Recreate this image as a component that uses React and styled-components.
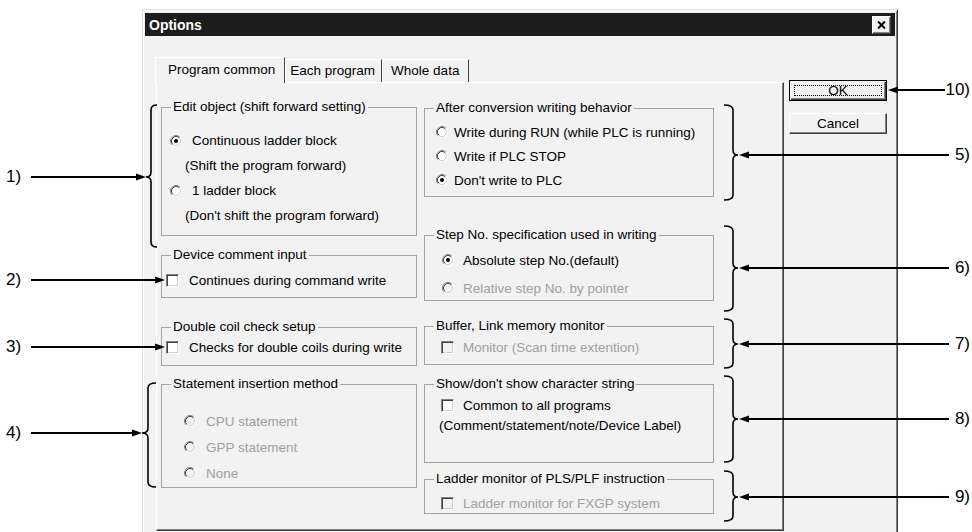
import React from "react";
import styled, { css, createGlobalStyle } from "styled-components";

const GlobalStyle = createGlobalStyle`
  html, body {
    margin: 0;
    padding: 0;
    background: #fff;
  }
  body {
    font-family: "Liberation Sans", Arial, sans-serif;
  }
`;

const FONT = `"Liberation Sans", Arial, sans-serif`;

const Page = styled.div`
  position: relative;
  width: 972px;
  height: 532px;
  overflow: hidden;
  background: #fff;
`;

const Dialog = styled.div`
  box-sizing: border-box;
  width: 756px;
  height: 560px;
  margin: 9px 0 0 142px;
  padding: 3px 2px 0 2px;
  background: #f2f2f2;
  border: 1px solid;
  border-color: #dcdcdc #404040 #404040 #dcdcdc;
  box-shadow: inset 1px 1px 0 #fff, inset -1px -1px 0 #808080;
`;

const TitleBar = styled.div`
  display: flex;
  align-items: center;
  justify-content: space-between;
  height: 23px;
  padding: 0 4px;
  background: #1c1c1c;
`;

const Title = styled.span`
  color: #fff;
  font: bold 14px ${FONT};
`;

const CloseBox = styled.div`
  box-sizing: border-box;
  display: flex;
  align-items: center;
  justify-content: center;
  width: 19px;
  height: 18px;
  background: #f2f2f2;
  border: 1px solid;
  border-color: #fff #404040 #404040 #fff;
  box-shadow: inset -1px -1px 0 #808080;
`;

const Body = styled.div`
  display: flex;
  align-items: flex-start;
  padding-top: 21px;
`;

const TabArea = styled.div`
  display: flex;
  flex-direction: column;
  margin-left: 10px;
`;

const TabStrip = styled.div`
  display: flex;
  align-items: flex-end;
  height: 25px;
`;

const Tab = styled.div`
  box-sizing: border-box;
  height: 23px;
  display: flex;
  align-items: center;
  padding: 0 ${(p) => p.$right || 6}px 1px ${(p) => p.$left || 4}px;
  font: 13.5px ${FONT};
  color: #000;
  border-top: 1px solid #fff;
  border-left: 1px solid #fff;
  border-right: 1px solid #404040;
  ${(p) =>
    p.$active &&
    css`
      height: 26px;
      margin-bottom: -1px;
      padding: 0 9px 2px 12px;
      position: relative;
      z-index: 1;
      background: #f2f2f2;
    `}
`;

const Panel = styled.div`
  box-sizing: border-box;
  width: 628px;
  height: 449px;
  margin-left: 1px;
  padding: 17px 0 0 4px;
  border: 1px solid;
  border-color: #fff #404040 #404040 #fff;
  box-shadow: inset -1px -1px 0 #808080;
  display: grid;
  grid-template-columns: 256px 290px;
  column-gap: 7px;
  align-items: start;
`;

const Column = styled.div`
  display: flex;
  flex-direction: column;
`;

const Group = styled.fieldset`
  box-sizing: border-box;
  min-width: 0;
  margin: ${(p) => p.$mt || 0}px 0 0 0;
  padding: ${(p) => p.$pt}px 0 0 0;
  height: ${(p) => p.$h}px;
  border: 1px solid #a3a3a3;
`;

const Legend = styled.legend`
  margin-left: 9px;
  padding: 0 2px;
  font: 13.5px ${FONT};
  line-height: 14px;
  color: #000;
`;

const Row = styled.div`
  display: flex;
  align-items: center;
  height: ${(p) => p.$h || 20}px;
  padding-left: ${(p) => p.$indent}px;
  font: 13.5px ${FONT};
  white-space: nowrap;
  color: ${(p) => (p.$disabled ? "#a0a0a0" : "#000")};
`;

const Text = styled.span`
  margin-left: ${(p) => p.$gap || 0}px;
`;

const RadioSvg = styled.svg`
  flex: none;
  display: block;
`;

const Check = styled.span`
  box-sizing: border-box;
  flex: none;
  width: 13px;
  height: 13px;
  border: 1px solid;
  border-color: #808080 #fff #fff #808080;
  background: ${(p) => (p.$disabled ? "#f2f2f2" : "#fff")};
  box-shadow: inset 1px 1px 0 #404040, inset -1px -1px 0 #d4d0c8;
`;

const Buttons = styled.div`
  display: flex;
  flex-direction: column;
  gap: 12px;
  margin-left: 5px;
  padding-top: 23px;
`;

const DlgButton = styled.div`
  box-sizing: border-box;
  display: flex;
  align-items: center;
  justify-content: center;
  width: 98px;
  height: 21px;
  font: 13.5px ${FONT};
  color: #000;
  background: #f2f2f2;
  border: 1px solid;
  border-color: #fff #404040 #404040 #fff;
  box-shadow: inset -1px -1px 0 #808080;
  ${(p) =>
    p.$default &&
    css`
      padding: 4px;
      border: 1px solid #000;
      box-shadow: inset 1px 1px 0 #fff, inset -1px -1px 0 #404040,
        inset -2px -2px 0 #808080;
    `}
`;

const Focus = styled.span`
  flex: 1;
  align-self: stretch;
  display: flex;
  align-items: center;
  justify-content: center;
  border: 1px dotted #000;
`;

const Overlay = styled.svg`
  position: absolute;
  left: 0;
  top: 0;
  pointer-events: none;
`;

const Callout = styled.span`
  position: absolute;
  top: ${(p) => p.$y - 10}px;
  ${(p) => (p.$side === "left" ? "left: 6px;" : "right: 2px;")}
  font: 17px ${FONT};
  line-height: 20px;
  color: #000;
`;

const Radio = ({ checked, disabled }) => (
  <RadioSvg width="12" height="12" viewBox="0 0 12 12">
    <circle cx="6" cy="6" r="4.5" fill={disabled ? "#f2f2f2" : "#fff"} />
    <path d="M2.11 9.89A5.5 5.5 0 0 1 9.89 2.11" stroke="#808080" fill="none" />
    <path d="M9.89 2.11A5.5 5.5 0 0 1 2.11 9.89" stroke="#fff" fill="none" />
    <path d="M2.82 9.18A4.5 4.5 0 0 1 9.18 2.82" stroke="#404040" fill="none" />
    <path d="M9.18 2.82A4.5 4.5 0 0 1 2.82 9.18" stroke="#d4d0c8" fill="none" />
    {checked && (
      <circle cx="6" cy="6" r="2" fill={disabled ? "#808080" : "#000"} />
    )}
  </RadioSvg>
);

const Option = ({ kind, checked, disabled, indent, gap, h, children }) => (
  <Row $indent={indent} $h={h} $disabled={disabled}>
    {kind === "radio" && <Radio checked={checked} disabled={disabled} />}
    {kind === "check" && <Check $disabled={disabled} />}
    <Text $gap={kind ? gap : 0}>{children}</Text>
  </Row>
);

const leftCallouts = [
  { n: "1)", y: 177, tip: 146 },
  { n: "2)", y: 280, tip: 165 },
  { n: "3)", y: 347, tip: 165 },
  { n: "4)", y: 433, tip: 142 },
];

const rightCallouts = [
  { n: "10)", y: 90, tip: 888, end: 945 },
  { n: "5)", y: 155, tip: 739, end: 949 },
  { n: "6)", y: 268, tip: 739, end: 949 },
  { n: "7)", y: 344, tip: 739, end: 949 },
  { n: "8)", y: 419, tip: 739, end: 949 },
  { n: "9)", y: 497, tip: 739, end: 949 },
];

const leftBraces = [
  { x: 151, top: 105, bottom: 247, mid: 177, tip: 146, end: 157 },
  { x: 148, top: 383, bottom: 487, mid: 433, tip: 142, end: 156 },
];

const rightBraces = [
  { top: 105, bottom: 200, mid: 155 },
  { top: 226, bottom: 311, mid: 268 },
  { top: 319, bottom: 368, mid: 344 },
  { top: 376, bottom: 462, mid: 419 },
  { top: 471, bottom: 521, mid: 497 },
];

const brace = (x, top, bottom, mid, tip, end) =>
  `M${end} ${top} Q${x} ${top} ${x} ${top + 5} L${x} ${mid - 5} Q${x} ${mid} ${tip} ${mid} ` +
  `M${tip} ${mid} Q${x} ${mid} ${x} ${mid + 5} L${x} ${bottom - 5} Q${x} ${bottom} ${end} ${bottom}`;

const Annotations = () => (
  <>
    <Overlay width="972" height="532" viewBox="0 0 972 532">
      <g stroke="#000" strokeWidth="1.6" fill="none">
        {leftBraces.map((b, i) => (
          <path key={i} d={brace(b.x, b.top, b.bottom, b.mid, b.tip, b.end)} />
        ))}
        {rightBraces.map((b, i) => (
          <path key={i} d={brace(733, b.top, b.bottom, b.mid, 738, 724)} />
        ))}
      </g>
      {leftCallouts.map((c) => (
        <g key={c.n}>
          <line x1="31" y1={c.y} x2={c.tip - 8} y2={c.y} stroke="#000" strokeWidth="2" />
          <path
            d={`M${c.tip} ${c.y} L${c.tip - 10} ${c.y - 3.5} L${c.tip - 10} ${c.y + 3.5}Z`}
            fill="#000"
          />
        </g>
      ))}
      {rightCallouts.map((c) => (
        <g key={c.n}>
          <line x1={c.tip + 8} y1={c.y} x2={c.end} y2={c.y} stroke="#000" strokeWidth="2" />
          <path
            d={`M${c.tip} ${c.y} L${c.tip + 10} ${c.y - 3.5} L${c.tip + 10} ${c.y + 3.5}Z`}
            fill="#000"
          />
        </g>
      ))}
    </Overlay>
    {leftCallouts.map((c) => (
      <Callout key={c.n} $side="left" $y={c.y}>
        {c.n}
      </Callout>
    ))}
    {rightCallouts.map((c) => (
      <Callout key={c.n} $side="right" $y={c.y}>
        {c.n}
      </Callout>
    ))}
  </>
);

const App = () => (
  <Page>
    <GlobalStyle />
    <Dialog>
      <TitleBar>
        <Title>Options</Title>
        <CloseBox>
          <svg width="9" height="8" viewBox="0 0 9 8">
            <path d="M1 0.5L8 7.5M8 0.5L1 7.5" stroke="#000" strokeWidth="2" />
          </svg>
        </CloseBox>
      </TitleBar>
      <Body>
        <TabArea>
          <TabStrip>
            <Tab $active>Program common</Tab>
            <Tab>Each program</Tab>
            <Tab $left={8} $right={9}>
              Whole data
            </Tab>
          </TabStrip>
          <Panel>
            <Column>
              <Group $h={136} $pt={14}>
                <Legend>Edit object (shift forward setting)</Legend>
                <Option kind="radio" checked indent={8} gap={10} h={25}>
                  Continuous ladder block
                </Option>
                <Option indent={23} h={25}>
                  (Shift the program forward)
                </Option>
                <Option kind="radio" indent={8} gap={10} h={25}>
                  1 ladder block
                </Option>
                <Option indent={23} h={25}>
                  (Don't shift the program forward)
                </Option>
              </Group>
              <Group $mt={12} $h={50} $pt={8}>
                <Legend>Device comment input</Legend>
                <Option kind="check" indent={4} gap={10}>
                  Continues during command write
                </Option>
              </Group>
              <Group $mt={22} $h={46} $pt={3}>
                <Legend>Double coil check setup</Legend>
                <Option kind="check" indent={4} gap={10}>
                  Checks for double coils during write
                </Option>
              </Group>
              <Group $mt={11} $h={111} $pt={17}>
                <Legend>Statement insertion method</Legend>
                <Option kind="radio" disabled indent={22} gap={10} h={26}>
                  CPU statement
                </Option>
                <Option kind="radio" disabled indent={22} gap={10} h={26}>
                  GPP statement
                </Option>
                <Option kind="radio" disabled indent={22} gap={10} h={26}>
                  None
                </Option>
              </Group>
            </Column>
            <Column>
              <Group $mt={1} $h={96} $pt={5}>
                <Legend>After conversion writing behavior</Legend>
                <Option kind="radio" indent={11} gap={6} h={24}>
                  Write during RUN (while PLC is running)
                </Option>
                <Option kind="radio" indent={11} gap={6} h={24}>
                  Write if PLC STOP
                </Option>
                <Option kind="radio" checked indent={11} gap={6} h={24}>
                  Don't write to PLC
                </Option>
              </Group>
              <Group $mt={31} $h={73} $pt={4}>
                <Legend>Step No. specification used in writing</Legend>
                <Option kind="radio" checked indent={17} gap={9} h={28}>
                  Absolute step No.(default)
                </Option>
                <Option kind="radio" disabled indent={17} gap={9} h={28}>
                  Relative step No. by pointer
                </Option>
              </Group>
              <Group $mt={18} $h={46} $pt={4}>
                <Legend>Buffer, Link memory monitor</Legend>
                <Option kind="check" disabled indent={16} gap={9}>
                  Monitor (Scan time extention)
                </Option>
              </Group>
              <Group $mt={12} $h={86} $pt={4}>
                <Legend>Show/don't show character string</Legend>
                <Option kind="check" indent={16} gap={9}>
                  Common to all programs
                </Option>
                <Option indent={14}>(Comment/statement/note/Device Label)</Option>
              </Group>
              <Group $mt={9} $h={42} $pt={7}>
                <Legend>Ladder monitor of PLS/PLF instruction</Legend>
                <Option kind="check" disabled indent={16} gap={9}>
                  Ladder monitor for FXGP system
                </Option>
              </Group>
            </Column>
          </Panel>
        </TabArea>
        <Buttons>
          <DlgButton $default>
            <Focus>OK</Focus>
          </DlgButton>
          <DlgButton>Cancel</DlgButton>
        </Buttons>
      </Body>
    </Dialog>
    <Annotations />
  </Page>
);

export default App;
